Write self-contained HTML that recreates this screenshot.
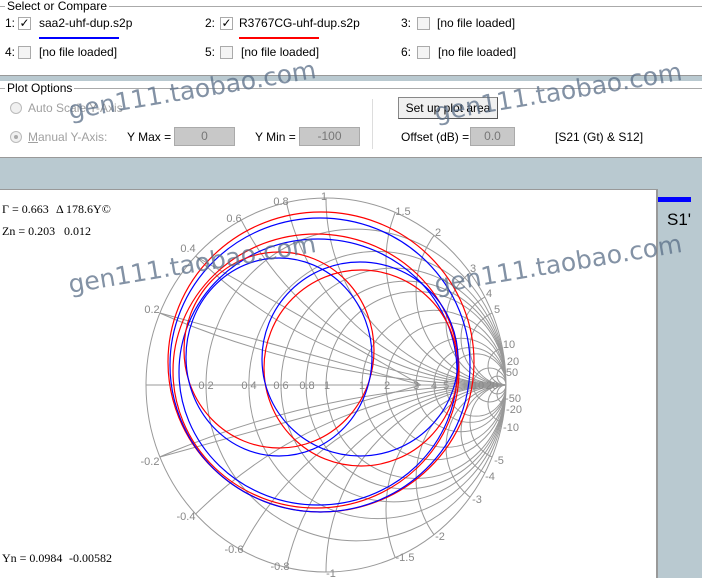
<!DOCTYPE html>
<html><head><meta charset="utf-8"><style>
*{margin:0;padding:0;box-sizing:border-box}
html,body{overflow:hidden}
body{width:702px;height:578px;overflow:hidden;background:#b9c9d0;font-family:"Liberation Sans",sans-serif;font-size:12px;color:#000;position:relative}
.a{position:absolute;white-space:nowrap}
.cb{position:absolute;width:13px;height:13px;border:1px solid #aaa;background:#f4f4f4}
.box{position:absolute;height:19px;background:#c8c8c8;border:1px solid #aaa;color:#777;text-align:center;line-height:17px}
.g{color:#a0a0a0}
.wm{position:absolute;font-size:25px;color:rgba(90,110,135,0.75);transform:rotate(-9.5deg);transform-origin:0 100%;white-space:nowrap;font-family:"DejaVu Sans","Liberation Sans",sans-serif}
</style></head><body>
<div class="a" style="left:0;top:0;width:702px;height:76px;background:#fff;border-bottom:1px solid #999"></div>
<div class="a" style="left:0;top:81px;width:702px;height:77px;background:#fff;border-bottom:1px solid #999"></div>
<div class="a" style="left:0;top:6px;width:702px;height:1px;background:#aaa"></div>
<div class="a" style="left:5px;top:-1px;background:#fff;padding:0 2px">Select or Compare</div>
<div class="a" style="left:0;top:88px;width:702px;height:1px;background:#aaa"></div>
<div class="a" style="left:5px;top:81px;background:#fff;padding:0 2px">Plot Options</div>

<div class="a" style="left:5px;top:16px">1:</div><div class="cb" style="left:18px;top:17px;background:#fff;font-size:12px;line-height:11px;text-align:center">✓</div><div class="a" style="left:39px;top:16px">saa2-uhf-dup.s2p</div>
<div class="a" style="left:39px;top:37px;width:80px;height:2px;background:#0000ff"></div>
<div class="a" style="left:205px;top:16px">2:</div><div class="cb" style="left:220px;top:17px;background:#fff;font-size:12px;line-height:11px;text-align:center">✓</div><div class="a" style="left:239px;top:16px">R3767CG-uhf-dup.s2p</div>
<div class="a" style="left:239px;top:37px;width:80px;height:2px;background:#ff0000"></div>
<div class="a" style="left:401px;top:16px">3:</div><div class="cb" style="left:417px;top:17px"></div><div class="a" style="left:437px;top:16px">[no file loaded]</div>
<div class="a" style="left:5px;top:45px">4:</div><div class="cb" style="left:18px;top:46px"></div><div class="a" style="left:39px;top:45px">[no file loaded]</div>
<div class="a" style="left:205px;top:45px">5:</div><div class="cb" style="left:220px;top:46px"></div><div class="a" style="left:241px;top:45px">[no file loaded]</div>
<div class="a" style="left:401px;top:45px">6:</div><div class="cb" style="left:417px;top:46px"></div><div class="a" style="left:438px;top:45px">[no file loaded]</div>

<div class="a" style="left:10px;top:102px;width:12px;height:12px;border-radius:50%;border:1px solid #bbb;background:#f0f0f0"></div>
<div class="a g" style="left:28px;top:101px">Auto Scale Y-Axis</div>
<div class="a" style="left:10px;top:131px;width:12px;height:12px;border-radius:50%;border:1px solid #bbb;background:#f0f0f0"><div style="width:4px;height:4px;background:#aaa;border-radius:50%;margin:3px"></div></div>
<div class="a g" style="left:28px;top:130px"><u>M</u>anual Y-Axis:</div>
<div class="a" style="left:127px;top:130px">Y Max =</div><div class="box" style="left:174px;top:127px;width:61px">0</div>
<div class="a" style="left:255px;top:130px">Y Min =</div><div class="box" style="left:299px;top:127px;width:61px">-100</div>
<div class="a" style="left:372px;top:99px;width:1px;height:50px;background:#ddd"></div>
<div class="a" style="left:398px;top:97px;width:100px;height:22px;background:#f0f0f0;border:1px solid #888;border-right-color:#555;border-bottom-color:#555;text-align:center;line-height:20px">Set up plot area</div>
<div class="a" style="left:401px;top:130px">Offset (dB) =</div><div class="box" style="left:470px;top:127px;width:45px">0.0</div>
<div class="a" style="left:555px;top:130px">[S21 (Gt) &amp; S12]</div>

<div class="a" style="left:0;top:189px;width:658px;height:389px;background:#fff;border-top:1px solid #999;border-right:2px solid #999"></div>
<div class="a" style="left:658px;top:197px;width:33px;height:5px;background:#0000ff"></div>
<div class="a" style="left:667px;top:210px;font-size:17px">S1'</div>

<svg class="a" style="left:0;top:0;overflow:hidden" width="702" height="578">
<defs><clipPath id="c"><ellipse cx="326" cy="385" rx="180" ry="187"/></clipPath></defs>
<g fill="none" stroke="#999" stroke-width="1">
<ellipse cx="326" cy="385" rx="180" ry="187"/>
<line x1="146" y1="385" x2="506" y2="385"/>
<g clip-path="url(#c)">
<g transform="translate(326,385) scale(180,-187)">
<circle cx="0.1667" cy="0" r="0.8333" vector-effect="non-scaling-stroke"/>
<circle cx="0.2857" cy="0" r="0.7143" vector-effect="non-scaling-stroke"/>
<circle cx="0.375" cy="0" r="0.625" vector-effect="non-scaling-stroke"/>
<circle cx="0.4444" cy="0" r="0.5556" vector-effect="non-scaling-stroke"/>
<circle cx="0.5" cy="0" r="0.5" vector-effect="non-scaling-stroke"/>
<circle cx="0.6" cy="0" r="0.4" vector-effect="non-scaling-stroke"/>
<circle cx="0.6667" cy="0" r="0.3333" vector-effect="non-scaling-stroke"/>
<circle cx="0.75" cy="0" r="0.25" vector-effect="non-scaling-stroke"/>
<circle cx="0.8" cy="0" r="0.2" vector-effect="non-scaling-stroke"/>
<circle cx="0.8333" cy="0" r="0.1667" vector-effect="non-scaling-stroke"/>
<circle cx="0.9091" cy="0" r="0.0909" vector-effect="non-scaling-stroke"/>
<circle cx="0.9524" cy="0" r="0.0476" vector-effect="non-scaling-stroke"/>
<circle cx="1" cy="5" r="5" vector-effect="non-scaling-stroke"/><circle cx="1" cy="-5" r="5" vector-effect="non-scaling-stroke"/>
<circle cx="1" cy="2.5" r="2.5" vector-effect="non-scaling-stroke"/><circle cx="1" cy="-2.5" r="2.5" vector-effect="non-scaling-stroke"/>
<circle cx="1" cy="1.6667" r="1.6667" vector-effect="non-scaling-stroke"/><circle cx="1" cy="-1.6667" r="1.6667" vector-effect="non-scaling-stroke"/>
<circle cx="1" cy="1.25" r="1.25" vector-effect="non-scaling-stroke"/><circle cx="1" cy="-1.25" r="1.25" vector-effect="non-scaling-stroke"/>
<circle cx="1" cy="1" r="1" vector-effect="non-scaling-stroke"/><circle cx="1" cy="-1" r="1" vector-effect="non-scaling-stroke"/>
<circle cx="1" cy="0.6667" r="0.6667" vector-effect="non-scaling-stroke"/><circle cx="1" cy="-0.6667" r="0.6667" vector-effect="non-scaling-stroke"/>
<circle cx="1" cy="0.5" r="0.5" vector-effect="non-scaling-stroke"/><circle cx="1" cy="-0.5" r="0.5" vector-effect="non-scaling-stroke"/>
<circle cx="1" cy="0.3333" r="0.3333" vector-effect="non-scaling-stroke"/><circle cx="1" cy="-0.3333" r="0.3333" vector-effect="non-scaling-stroke"/>
<circle cx="1" cy="0.25" r="0.25" vector-effect="non-scaling-stroke"/><circle cx="1" cy="-0.25" r="0.25" vector-effect="non-scaling-stroke"/>
<circle cx="1" cy="0.2" r="0.2" vector-effect="non-scaling-stroke"/><circle cx="1" cy="-0.2" r="0.2" vector-effect="non-scaling-stroke"/>
<circle cx="1" cy="0.1" r="0.1" vector-effect="non-scaling-stroke"/><circle cx="1" cy="-0.1" r="0.1" vector-effect="non-scaling-stroke"/>
<circle cx="1" cy="0.05" r="0.05" vector-effect="non-scaling-stroke"/><circle cx="1" cy="-0.05" r="0.05" vector-effect="non-scaling-stroke"/>
</g>
<line x1="160" y1="313" x2="421" y2="385"/><line x1="160" y1="457" x2="421" y2="385"/>
<line x1="195" y1="256" x2="421" y2="385"/>
</g>
</g>
<g font-size="11" fill="#888" text-anchor="middle" font-family="Liberation Sans,sans-serif">
<text x="152" y="313">0.2</text><text x="188" y="252">0.4</text><text x="234" y="222">0.6</text><text x="281" y="205">0.8</text><text x="324" y="200">1</text>
<text x="403" y="215">1.5</text><text x="438" y="236">2</text><text x="473" y="272">3</text><text x="489" y="297">4</text><text x="497" y="313">5</text><text x="509" y="348">10</text><text x="513" y="365">20</text><text x="512" y="376">50</text>
<text x="150" y="465">-0.2</text><text x="186" y="520">-0.4</text><text x="234" y="553">-0.6</text><text x="280" y="570">-0.8</text><text x="331" y="577">-1</text>
<text x="405" y="561">-1.5</text><text x="440" y="540">-2</text><text x="477" y="503">-3</text><text x="490" y="480">-4</text><text x="499" y="464">-5</text><text x="511" y="431">-10</text><text x="514" y="413">-20</text><text x="513" y="402">-50</text>
<text x="206" y="389">0.2</text><text x="249" y="389">0.4</text><text x="281" y="389">0.6</text><text x="307" y="389">0.8</text><text x="327" y="389">1</text><text x="362" y="389">1</text><text x="387" y="389">2</text><text x="416" y="389">3</text><text x="434" y="389">4</text><text x="446" y="389">5</text><text x="478" y="389">10</text><text x="492" y="389">20</text>
</g>
<g fill="none" stroke-width="1.2">
<ellipse cx="321" cy="362" rx="153" ry="150" stroke="#ff0000"/>
<ellipse cx="320" cy="365" rx="150" ry="147" stroke="#0000ff"/>
<ellipse cx="316" cy="371" rx="143" ry="137" stroke="#ff0000"/>
<ellipse cx="318" cy="372" rx="139" ry="133" stroke="#0000ff"/>
<ellipse cx="361" cy="368" rx="97" ry="98" stroke="#ff0000"/>
<ellipse cx="360" cy="359" rx="98" ry="97" stroke="#0000ff"/>
<ellipse cx="279" cy="350" rx="95" ry="98" stroke="#ff0000"/>
<ellipse cx="279" cy="357" rx="93" ry="99" stroke="#0000ff"/>
</g>
<g font-family="Liberation Serif,serif" font-size="12" fill="#000">
<text x="2" y="213">Γ = 0.663</text><text x="56" y="213">Δ 178.6Y©</text>
<text x="2" y="235">Zn = 0.203</text><text x="64" y="235">0.012</text>
<text x="2" y="562">Yn = 0.0984</text><text x="69" y="562">-0.00582</text>
</g>
</svg>
<div class="wm" style="left:71px;top:96px">gen111.taobao.com</div>
<div class="wm" style="left:437px;top:98px">gen111.taobao.com</div>
<div class="wm" style="left:71px;top:270px">gen111.taobao.com</div>
<div class="wm" style="left:437px;top:270px">gen111.taobao.com</div>
</body></html>
